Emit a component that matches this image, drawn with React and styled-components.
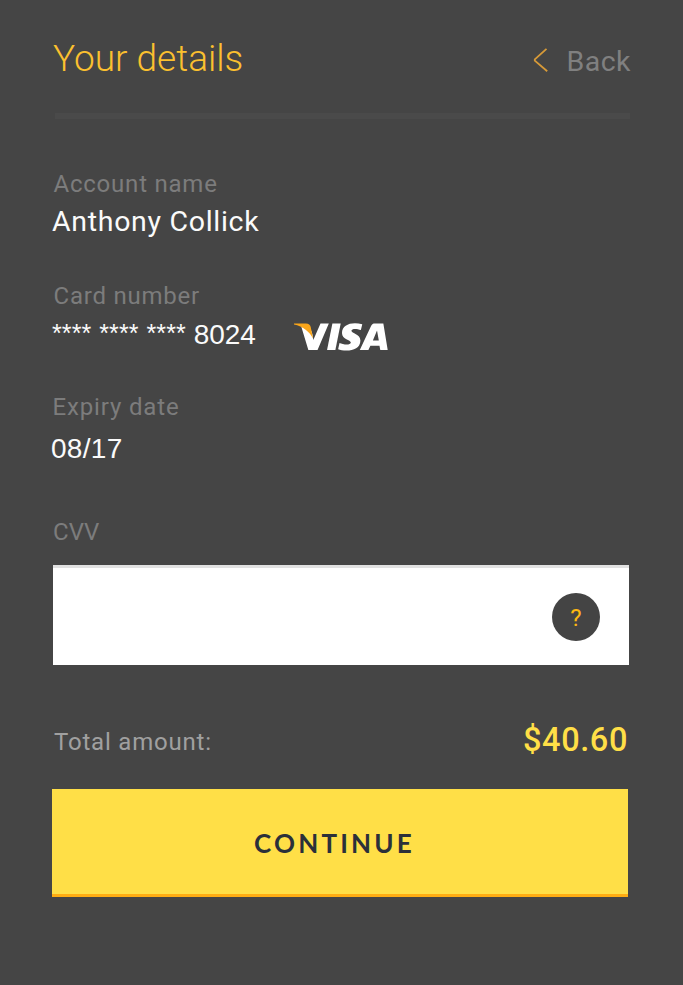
import React from "react";
import styled, { createGlobalStyle } from "styled-components";

const GlobalStyle = createGlobalStyle`
  *, *::before, *::after { box-sizing: border-box; }
  body { margin: 0; background: #454545; }
`;

const Page = styled.main`
  width: 683px;
  height: 985px;
  padding: 36px 54px 0 52px;
  background: #454545;
  font-family: Roboto, sans-serif;
  overflow: hidden;
`;

const Header = styled.header`
  display: flex;
  justify-content: space-between;
  height: 83px;
  margin: 0 -1px 0 3px;
  border-bottom: 6px solid #4a4a4a;
`;

const Title = styled.h1`
  margin: 1px 0 0 -2px;
  font-size: 37px;
  line-height: 44px;
  font-weight: 300;
  letter-spacing: 0;
  color: #fbc02f;
`;

const BackLink = styled.a`
  display: flex;
  height: 50px;
  gap: 18.5px;
  margin-right: -1px;
  color: #808080;
  font-size: 28.5px;
  line-height: 51px;
  letter-spacing: 0.5px;
`;

const Chevron = styled.svg`
  width: 15px;
  height: 24px;
  margin-top: 12px;
`;

const Details = styled.dl`
  display: grid;
  grid-template-rows: 112px 111px 125px 49px;
  margin: 49px 0 0;
`;

const Field = styled.div`
  display: flex;
  flex-direction: column;
`;

const Label = styled.dt`
  margin-left: ${(p) => p.$inset || 1}px;
  font-size: 24px;
  line-height: 32px;
  letter-spacing: ${(p) => p.$tracking || 0.78}px;
  color: #7c7c7c;
`;

const Value = styled.dd`
  display: flex;
  align-items: flex-start;
  margin: ${(p) => p.$gap}px 0 0 ${(p) => p.$shift || 0}px;
  font-size: 28.5px;
  line-height: 36px;
  letter-spacing: 0.7px;
  color: #fafafa;
`;

const NumericValue = styled(Value)`
  font-family: "Liberation Sans", Arial, sans-serif;
  font-size: 28px;
  letter-spacing: ${(p) => p.$tracking || -0.1}px;
  white-space: pre;
`;

const Mask = styled.span`
  margin-top: -2px;
  font-size: 25px;
  letter-spacing: 0.1px;
  word-spacing: 0.9px;
`;

const VisaLogo = styled.svg`
  width: 95px;
  height: 30px;
  margin: 4.5px 0 0 37.5px;
`;

const CvvBox = styled.label`
  display: flex;
  align-items: center;
  width: 576px;
  height: 100px;
  margin-left: 1px;
  padding: 1px 29px 0 24px;
  background: #fff;
  border-top: 3px solid #e1e1e1;
`;

const CvvInput = styled.input`
  flex: 1;
  height: 60px;
  border: 0;
  outline: 0;
  background: transparent;
  font: 28px Roboto, sans-serif;
`;

const HelpButton = styled.button`
  width: 48px;
  height: 48px;
  padding: 2px 0 0;
  border: 0;
  border-radius: 50%;
  background: #444;
  color: #fcb813;
  font: 24px/46px Roboto, sans-serif;
`;

const Total = styled.div`
  display: flex;
  justify-content: space-between;
  width: 576px;
  height: 40px;
  margin-top: 56px;
  line-height: 40px;
`;

const TotalLabel = styled.span`
  margin: 1px 0 0 2px;
  color: #a0a0a0;
  font-size: 24px;
  letter-spacing: 0.8px;
`;

const TotalAmount = styled.strong`
  margin-top: -1px;
  color: #ffdf47;
  font-size: 32.5px;
  font-weight: 500;
  letter-spacing: 0.6px;
`;

const ContinueButton = styled.button`
  display: block;
  width: 576px;
  height: 108px;
  margin-top: 28px;
  padding: 3px 11px 0 0;
  border: 0;
  border-bottom: 3px solid #ffad13;
  background: #ffdf47;
  color: #2b303a;
  font: 700 26px Lato, sans-serif;
  letter-spacing: 3.2px;
`;

export default function App() {
  return (
    <>
      <GlobalStyle />
      <Page>
        <Header>
          <Title>Your details</Title>
          <BackLink>
            <Chevron viewBox="0 0 15 24" fill="none">
              <path d="M13.5 .8 1.8 11.4v1.2L14.2 23.3" stroke="#d79a38" strokeWidth="1.8" />
            </Chevron>
            Back
          </BackLink>
        </Header>
        <Details>
          <Field>
            <Label $inset={1.5}>Account name</Label>
            <Value $gap={4}>Anthony Collick</Value>
          </Field>
          <Field>
            <Label $inset={1.5}>Card number</Label>
            <NumericValue $gap={5}>
              <Mask>**** **** **** </Mask>8024
              <VisaLogo viewBox="0 0 96 30" preserveAspectRatio="none" role="img" aria-label="Visa">
                <g fill="#fff">
                  <path d="M13 2C17 5 19 9 19.8 13l.7 5L27.8 1.4h8.4L24.8 28H15.5L8.5 5Z" />
                  <path d="M39.8 1.4h8.4L42.8 28h-8.4Z" />
                  <path d="M70 2.2 68.6 8.1c-4-1.6-9.3-1.8-9.5.5-.2 2.8 9 3.1 9 9.8 0 7.2-6.8 10.2-14 10.2-3.5 0-6.6-.6-8.5-1.4l1.4-6.2c3.3 1.6 10.8 2.6 11.4-.2.6-2.9-8.9-2.9-8.9-9.8C49.5 2.4 59.5-.6 70 2.2Z" />
                  <path fillRule="evenodd" d="M82.8 1.4h8.5L95.7 28h-7.5l-.8-4.2H78.2L76.2 28h-8.7L79 3.8C79.9 2 80.9 1.4 82.8 1.4Zm2.1 7.2-4.2 9.9h6Z" />
                </g>
                <path d="M1 1.6h12c3 0 4.2 1.2 4.9 3.5l2.4 11.5C17 10 10 4.2 1 2.5Z" fill="#f9a51a" />
              </VisaLogo>
            </NumericValue>
          </Field>
          <Field>
            <Label $inset={0.5} $tracking={0.85}>Expiry date</Label>
            <NumericValue $gap={8} $shift={-1} $tracking={0.3}>08/17</NumericValue>
          </Field>
          <Field>
            <Label $tracking={0.1}>CVV</Label>
          </Field>
        </Details>
        <CvvBox>
          <CvvInput aria-label="CVV" />
          <HelpButton>?</HelpButton>
        </CvvBox>
        <Total>
          <TotalLabel>Total amount:</TotalLabel>
          <TotalAmount>$40.60</TotalAmount>
        </Total>
        <ContinueButton>CONTINUE</ContinueButton>
      </Page>
    </>
  );
}
